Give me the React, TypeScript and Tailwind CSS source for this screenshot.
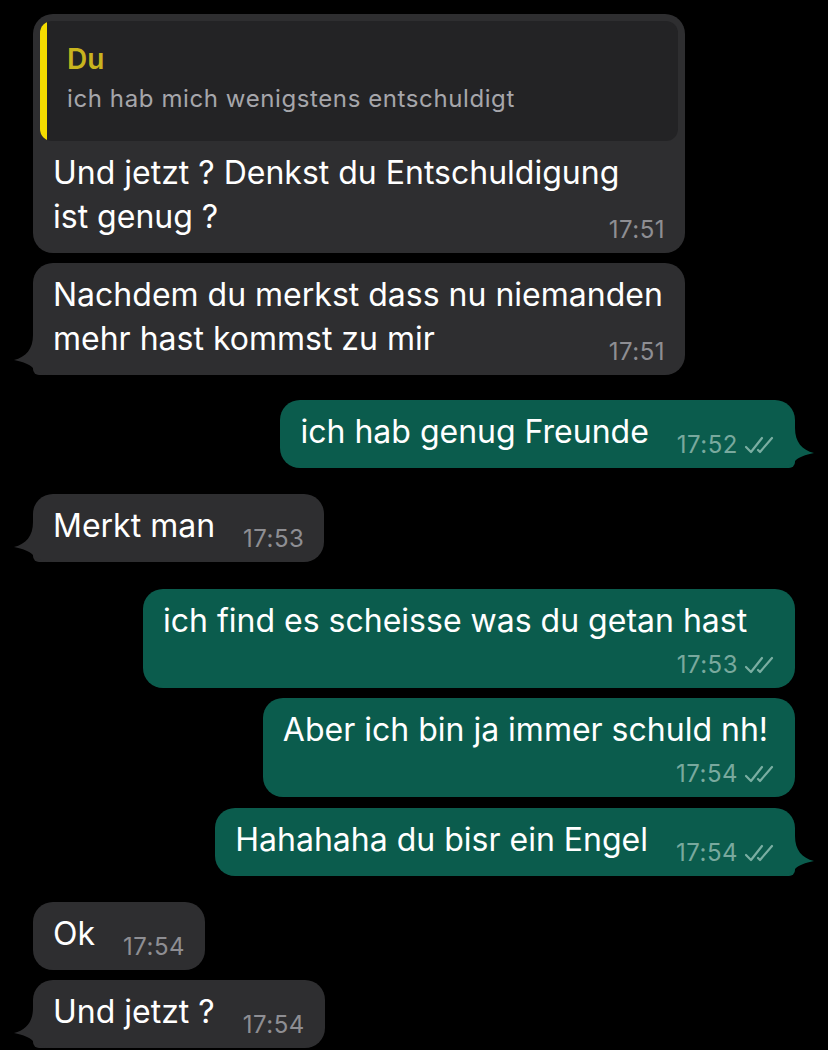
import React from 'react';

type Side = 'in' | 'out';

const font = { fontFamily: 'Inter, "Noto Sans", sans-serif' };

function Tail({ side }: { side: Side }) {
  if (side === 'in') {
    return (
      <svg className="absolute bottom-0 left-[-20px] h-[40px] w-[40px]" viewBox="0 0 40 40">
        <path d="M20 0 C20 14 13 22 1 25 C10 27 16 29 20 33 C24 37 30 40 40 40 L40 0 Z" fill="#2e2e30" />
      </svg>
    );
  }
  return (
    <svg className="absolute bottom-0 right-[-20px] h-[40px] w-[40px]" viewBox="0 0 40 40">
      <path d="M20 0 C20 14 27 22 39 25 C30 27 24 29 20 33 C16 37 10 40 0 40 L0 0 Z" fill="#0b5c4d" />
    </svg>
  );
}

function Ticks() {
  return (
    <svg width="31" height="20" viewBox="0 0 31 20" className="mb-[3px] ml-[6px]" fill="none" stroke="#7aaea2" strokeWidth="2.2" strokeLinecap="round" strokeLinejoin="round">
      <path d="M2 12 L7 17 L18 3" />
      <path d="M14 15 L16 17 L28 3" />
    </svg>
  );
}

function Time({ t, side }: { t: string; side: Side }) {
  return (
    <div className="flex items-end">
      <span className={`text-[24px] leading-[26px] tracking-[0.5px] ${side === 'in' ? 'text-[#8e8e93]' : 'text-[#79a99e]'}`}>{t}</span>
      {side === 'out' && <Ticks />}
    </div>
  );
}

function Bubble({
  side, lines, time, tail, below, quote, wide, extraR = 0,
}: {
  side: Side; lines: string[]; time: string; tail?: boolean; below?: boolean; quote?: boolean; wide?: boolean; extraR?: number;
}) {
  const bg = side === 'in' ? 'bg-[#2e2e30]' : 'bg-[#0b5c4d]';
  const corner = tail ? (side === 'in' ? 'rounded-bl-[6px]' : 'rounded-br-[6px]') : '';
  return (
    <div className={`flex ${side === 'in' ? 'justify-start pl-[33px]' : 'justify-end pr-[33px]'}`}>
      <div className={`relative max-w-[652px] rounded-[20px] ${corner} ${bg} ${wide ? 'w-[652px]' : ''}`}>
        {tail && <Tail side={side} />}
        {quote && (
          <div className="relative m-[7px] mb-0 h-[120px] overflow-hidden rounded-[12px] bg-[#232325] pl-[27px] pt-[22px]">
            <div className="absolute left-0 top-0 h-full w-[7px] bg-[#f5dc00]" />
            <div className="text-[28px] font-semibold leading-[32px] text-[#c8b41e]">Du</div>
            <div className="mt-[10px] whitespace-nowrap text-[24px] leading-[28px] tracking-[0.6px] text-[#a6a6ab]">ich hab mich wenigstens entschuldigt</div>
          </div>
        )}
        {below ? (
          <div className="relative pb-[10px] pl-[20px] pr-[20px] pt-[10px]">
            {/* extra right gap on the text only, the time row stays at the usual padding */}
            <div className="whitespace-nowrap text-[32px] leading-[44px] text-white" style={{ paddingRight: extraR }}>
              {lines.map((l, i) => <div key={i}>{l}</div>)}
            </div>
            <div className="mt-[9px] flex justify-end"><Time t={time} side={side} /></div>
          </div>
        ) : (
          <div className="relative flex items-end justify-between px-[20px] pb-[14px] pt-[10px]">
            <div className={`whitespace-nowrap text-[32px] leading-[44px] text-white ${wide ? 'min-w-0 flex-1' : ''}`}>{lines.map((l, i) => <div key={i}>{l}</div>)}</div>
            <div className="mb-[-4px] ml-[28px] shrink-0"><Time t={time} side={side} /></div>
          </div>
        )}
      </div>
    </div>
  );
}

export default function App() {
  return (
    <div className="h-[1050px] w-[828px] overflow-hidden bg-black pt-[14px]" style={font}>
      <div className="flex flex-col">
        <Bubble side="in" quote wide lines={['Und jetzt ? Denkst du Entschuldigung', 'ist genug ?']} time="17:51" />
        <div className="h-[10px]" />
        <Bubble side="in" tail wide lines={['Nachdem du merkst dass nu niemanden', 'mehr hast kommst zu mir']} time="17:51" />
        <div className="h-[25px]" />
        <Bubble side="out" tail lines={['ich hab genug Freunde']} time="17:52" />
        <div className="h-[26px]" />
        <Bubble side="in" tail lines={['Merkt man']} time="17:53" />
        <div className="h-[27px]" />
        <Bubble side="out" below extraR={30} lines={['ich find es scheisse was du getan hast']} time="17:53" />
        <div className="h-[10px]" />
        <Bubble side="out" below extraR={7} lines={['Aber ich bin ja immer schuld nh!']} time="17:54" />
        <div className="h-[11px]" />
        <Bubble side="out" tail lines={['Hahahaha du bisr ein Engel']} time="17:54" />
        <div className="h-[26px]" />
        <Bubble side="in" lines={['Ok']} time="17:54" />
        <div className="h-[10px]" />
        <Bubble side="in" tail lines={['Und jetzt ?']} time="17:54" />
      </div>
    </div>
  );
}
